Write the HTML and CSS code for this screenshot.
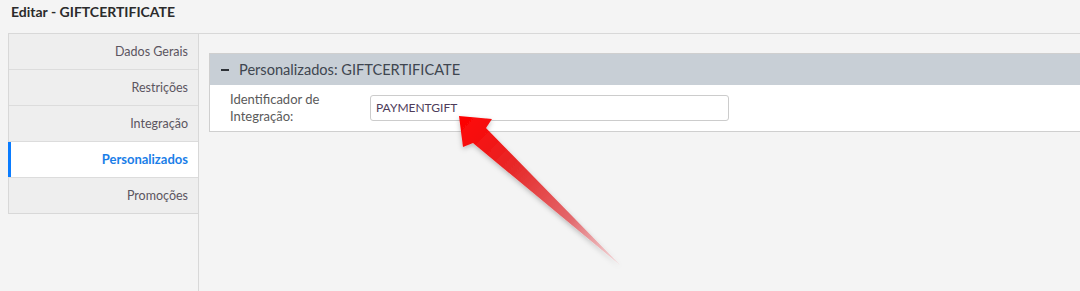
FILE: index.html
```html
<!DOCTYPE html>
<html lang="pt">
<head>
  <meta charset="UTF-8" />
  <meta name="viewport" content="width=device-width, initial-scale=1.0" />
  <title>Editar - GIFTCERTIFICATE</title>
  <link rel="stylesheet" href="styles.css">
</head>
<body>
  <h1 class="page-title">Editar - GIFTCERTIFICATE</h1>

  <div class="editor">
    <div class="side">
      <ul class="tabs">
        <li>Dados Gerais</li>
        <li>Restrições</li>
        <li>Integração</li>
        <li class="active">Personalizados</li>
        <li>Promoções</li>
      </ul>
    </div>

    <div class="content">
      <div class="panel">
        <div class="panel-head">
          <span class="toggle"></span>
          <span>Personalizados: GIFTCERTIFICATE</span>
        </div>
        <div class="panel-body">
          <label class="field-label" for="ident">Identificador de Integração:</label>
          <input id="ident" class="field-input" type="text" value="PAYMENTGIFT">
        </div>
      </div>
    </div>
  </div>

  <svg class="callout" width="1080" height="291" viewBox="0 0 1080 291">
    <defs>
      <linearGradient id="arrowFill" x1="459" y1="116" x2="620" y2="265" gradientUnits="userSpaceOnUse">
        <stop offset="0" stop-color="#ff0000" />
        <stop offset="0.35" stop-color="#e62a2a" />
        <stop offset="0.7" stop-color="#e36a6e" />
        <stop offset="1" stop-color="#f3c4c8" stop-opacity="0.6" />
      </linearGradient>
      <filter id="arrowShadow" x="-20%" y="-20%" width="140%" height="140%">
        <feDropShadow dx="0" dy="2" stdDeviation="2.5" flood-color="#000" flood-opacity="0.25" />
      </filter>
    </defs>
    <polygon points="459,116 492,119 486,128 620,265 473,143 463,147" fill="url(#arrowFill)" filter="url(#arrowShadow)" />
  </svg>
</body>
</html>
```

FILE: styles.css
```css
body {
  margin: 0;
  background: #f4f4f4;
  font-family: 'Lato', 'Noto Sans', sans-serif;
  color: #555;
  height: 291px;
  overflow: hidden;
}

.page-title {
  margin: 0;
  height: 33px;
  padding: 3px 0 0 11px;
  box-sizing: border-box;
  font-size: 14px;
  font-weight: bold;
  color: #2b2b2b;
}

.editor {
  display: flex;
  margin-left: 8px;
  border-top: 1px solid #d8d8d8;
  height: 258px;
}

.side {
  width: 190px;
  border-right: 1px solid #d8d8d8;
}

.tabs {
  list-style: none;
  margin: 0;
  padding: 0;
  border-left: 1px solid #d8d8d8;
  border-bottom: 1px solid #d8d8d8;
}

.tabs li {
  height: 35px;
  line-height: 35px;
  padding-right: 10px;
  text-align: right;
  font-size: 12.5px;
  color: #5b5560;
  background: #eeeeee;
  border-bottom: 1px solid #dcdcdc;
}

.tabs li:last-child {
  border-bottom: none;
}

.tabs li.active {
  background: #fff;
  color: #1a7ee8;
  font-weight: bold;
  font-size: 13px;
  box-shadow: inset 3px 0 0 #0a7cff;
  margin-left: -1px;
}

.content {
  flex: 1;
  padding: 19px 0 0 10px;
}

.panel {
  border: 1px solid #cfcfcf;
  border-right: none;
  background: #fff;
}

.panel-head {
  display: flex;
  align-items: center;
  gap: 10px;
  height: 31px;
  padding-left: 11px;
  background: #c8cfd6;
  font-size: 14.6px;
  color: #3f4650;
}

.toggle {
  width: 8px;
  height: 2px;
  background: #2e3238;
}

.panel-body {
  display: flex;
  align-items: center;
  height: 46px;
  padding-left: 20px;
}

.field-label {
  width: 140px;
  font-size: 13px;
  line-height: 17px;
  color: #5a5a5a;
}

.field-input {
  width: 359px;
  height: 26px;
  box-sizing: border-box;
  border: 1px solid #cccccc;
  border-radius: 3px;
  padding: 0 5px;
  font-family: 'Lato', 'Noto Sans', sans-serif;
  font-size: 12px;
  color: #4e3c5a;
  margin-top: -1px;
}

.callout {
  position: absolute;
  left: 0;
  top: 0;
  pointer-events: none;
}
```
